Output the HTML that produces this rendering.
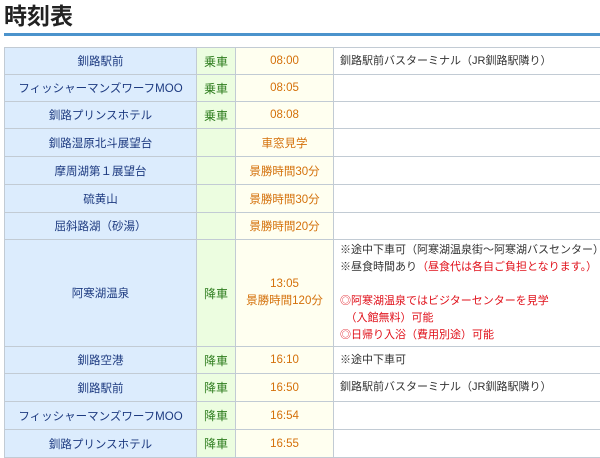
<!DOCTYPE html>
<html><head><meta charset="utf-8"><style>
body{margin:0;background:#fff;width:600px;height:456px;overflow:hidden;font-family:"Liberation Sans","Noto Sans CJK JP",sans-serif;}
h1{position:absolute;left:4px;top:1px;margin:0;font-size:23px;line-height:30px;font-weight:bold;color:#222;}
.line{position:absolute;left:4px;top:33px;width:596px;height:3px;background:#4b93cc;}
table{position:absolute;left:4px;top:47px;border-collapse:collapse;width:620px;font-size:11.5px;}
td{border:1px solid #c2cbd4;height:26px;padding:0;}
td.a{width:191px;background:#dcecfd;color:#1d3a80;text-align:center;}
td.b{width:38px;background:#ecfde0;color:#2e7d1e;text-align:center;font-size:12px;}
td.c{width:97px;background:#fffff0;color:#d4700a;text-align:center;}
td.d{background:#fff;color:#333;padding-left:6px;line-height:17px;font-size:11px;white-space:nowrap;}
.r{color:#e0101a}
</style></head><body>
<h1>時刻表</h1><div class="line"></div>
<table>
<tr><td class="a">釧路駅前</td><td class="b">乗車</td><td class="c">08:00</td><td class="d">釧路駅前バスターミナル（JR釧路駅隣り）</td></tr>
<tr><td class="a">フィッシャーマンズワーフMOO</td><td class="b">乗車</td><td class="c">08:05</td><td class="d"></td></tr>
<tr><td class="a">釧路プリンスホテル</td><td class="b">乗車</td><td class="c">08:08</td><td class="d"></td></tr>
<tr><td class="a" style="height:27px">釧路湿原北斗展望台</td><td class="b"></td><td class="c">車窓見学</td><td class="d"></td></tr>
<tr><td class="a" style="height:27px">摩周湖第１展望台</td><td class="b"></td><td class="c">景勝時間30分</td><td class="d"></td></tr>
<tr><td class="a" style="height:27px">硫黄山</td><td class="b"></td><td class="c">景勝時間30分</td><td class="d"></td></tr>
<tr><td class="a">屈斜路湖（砂湯）</td><td class="b"></td><td class="c">景勝時間20分</td><td class="d"></td></tr>
<tr><td class="a" style="height:106px">阿寒湖温泉</td><td class="b">降車</td><td class="c" style="line-height:17px">13:05<br>景勝時間120分</td><td class="d">※途中下車可（阿寒湖温泉街～阿寒湖バスセンター）<br>※昼食時間あり<span class="r">（昼食代は各自ご負担となります。）</span><br><br><span class="r">◎阿寒湖温泉ではビジターセンターを見学<br>　（入館無料）可能<br>◎日帰り入浴（費用別途）可能</span></td></tr>
<tr><td class="a">釧路空港</td><td class="b">降車</td><td class="c">16:10</td><td class="d">※途中下車可</td></tr>
<tr><td class="a" style="height:27px">釧路駅前</td><td class="b">降車</td><td class="c">16:50</td><td class="d">釧路駅前バスターミナル（JR釧路駅隣り）</td></tr>
<tr><td class="a" style="height:27px">フィッシャーマンズワーフMOO</td><td class="b">降車</td><td class="c">16:54</td><td class="d"></td></tr>
<tr><td class="a" style="height:27px">釧路プリンスホテル</td><td class="b">降車</td><td class="c">16:55</td><td class="d"></td></tr>
</table>
</body></html>
